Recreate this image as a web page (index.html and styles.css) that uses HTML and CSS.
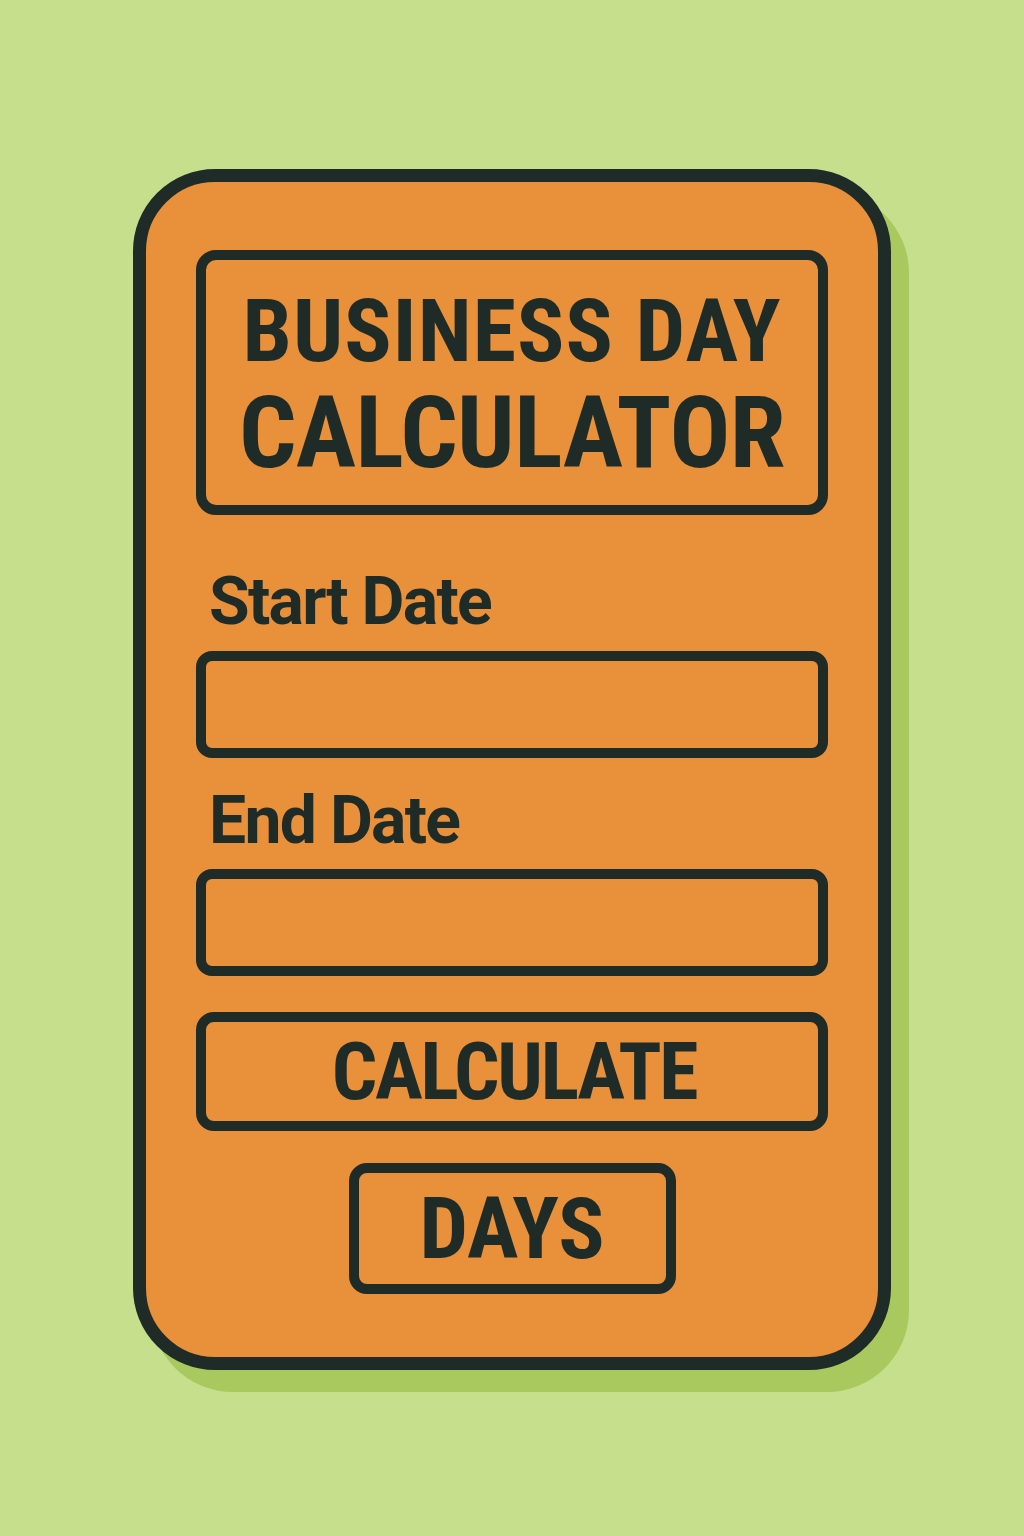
FILE: index.html
```html
<!DOCTYPE html>
<html lang="en">
<head>
<meta charset="utf-8">
<title>Business Day Calculator</title>
<link rel="stylesheet" href="styles.css">
</head>
<body>
  <main class="card">
    <h1 class="title">
      <span class="title-line title-line-top">BUSINESS DAY</span>
      <span class="title-line title-line-bottom">CALCULATOR</span>
    </h1>

    <label class="field-label label-start" for="start-date">Start Date</label>
    <input class="field-input" id="start-date" type="text">

    <label class="field-label label-end" for="end-date">End Date</label>
    <input class="field-input" id="end-date" type="text">

    <button class="calc-button" type="button">CALCULATE</button>

    <div class="result">DAYS</div>
  </main>
</body>
</html>
```
FILE: styles.css
```css
* {
  box-sizing: border-box;
}

html, body {
  margin: 0;
  padding: 0;
}

body {
  background: #c5df8c;
  padding-top: 169px;
  min-height: 1536px;
  font-family: Roboto, "Liberation Sans", sans-serif;
  color: #1e2b27;
}

.card {
  width: 758px;
  height: 1201px;
  margin: 0 auto;
  border: 13px solid #1e2b27;
  border-radius: 82px;
  background: #e8903a;
  box-shadow: 18px 22px 0 #a9c95f;
  padding: 68px 50px 63px;
  display: flex;
  flex-direction: column;
}

/* headline panel: condensed caps on two lines */
.title {
  margin: 0;
  height: 265px;
  border: 10px solid #1e2b27;
  border-radius: 20px;
  display: flex;
  flex-direction: column;
  align-items: center;
  justify-content: center;
  padding-top: 4px;
  gap: 7px;
  font-weight: 700;
  font-stretch: 87.5%;
}

.title-line {
  display: block;
  line-height: 1;
  white-space: nowrap;
}

.title-line-top {
  font-size: 88px;
  letter-spacing: 1.1px;
}

.title-line-bottom {
  font-size: 101px;
  letter-spacing: -0.6px;
}

.field-label {
  display: block;
  font-size: 66px;
  line-height: 1;
  font-weight: 700;
  padding-left: 13px;
  letter-spacing: -1.7px;
}

.label-start {
  margin-top: 54px;
}

.label-end {
  margin-top: 30px;
}

.field-input {
  display: block;
  width: 100%;
  height: 107px;
  margin: 16px 0 0;
  border: 10px solid #1e2b27;
  border-radius: 16px;
  background: transparent;
  font: inherit;
  outline: none;
}

.label-end + .field-input {
  margin-top: 15px;
}

.calc-button {
  display: flex;
  align-items: center;
  justify-content: center;
  width: 100%;
  height: 119px;
  margin-top: 36px;
  border: 10px solid #1e2b27;
  border-radius: 18px;
  background: transparent;
  color: #1e2b27;
  font-family: inherit;
  font-size: 80px;
  font-weight: 700;
  font-stretch: 80%;
  letter-spacing: -2.3px;
  line-height: 1;
  padding: 0 0 0 4px;
}

.result {
  align-self: center;
  display: flex;
  align-items: center;
  justify-content: center;
  width: 327px;
  height: 131px;
  margin-top: 32px;
  border: 10px solid #1e2b27;
  border-radius: 18px;
  font-size: 86px;
  font-weight: 700;
  font-stretch: 85%;
  line-height: 1;
}
```
